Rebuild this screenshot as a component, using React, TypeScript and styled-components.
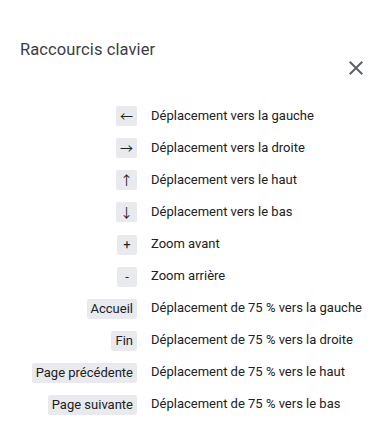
import { Fragment } from "react";
import styled, { createGlobalStyle } from "styled-components";

const GlobalStyle = createGlobalStyle`
  html, body {
    margin: 0;
    padding: 0;
    background: #ffffff;
  }

  body {
    font-family: Roboto, "Liberation Sans", Arial, sans-serif;
  }
`;

const Dialog = styled.div`
  width: 380px;
  height: 437px;
  box-sizing: border-box;
  padding-top: 38px;
  background: #ffffff;
`;

const Header = styled.header`
  display: flex;
  align-items: flex-start;
  justify-content: space-between;
  padding: 0 12px 0 20px;

  h1 {
    margin: 0;
    font-size: 16.5px;
    line-height: 24px;
    font-weight: 400;
    color: #3c4043;
    letter-spacing: 0.1px;
  }
`;

const CloseButton = styled.button`
  margin-top: 18px;
  width: 24px;
  height: 24px;
  padding: 0;
  border: none;
  background: none;
  color: #5f6368;
  cursor: pointer;
  display: flex;
  align-items: center;
  justify-content: center;

  svg {
    width: 24px;
    height: 24px;
    fill: currentColor;
  }
`;

const ShortcutTable = styled.dl`
  display: grid;
  grid-template-columns: 109px auto;
  grid-auto-rows: 32px;
  column-gap: 14px;
  align-items: center;
  margin: 20px 0 0 28px;
  padding: 0;
`;

const KeyCell = styled.dt`
  justify-self: end;
  margin: 0;
`;

const Key = styled.kbd<{ $arrow?: boolean }>`
  display: inline-block;
  box-sizing: border-box;
  min-width: 20px;
  height: 20px;
  padding: 0 4px;
  border-radius: 2px;
  background: #e8eaed;
  color: #202124;
  font-family: ${(p) =>
    p.$arrow
      ? `"Noto Sans CJK JP", sans-serif`
      : `Roboto, "Liberation Sans", Arial, sans-serif`};
  font-size: 13px;
  line-height: 20px;
  text-align: center;
`;

const Description = styled.dd`
  margin: 0;
  font-size: 13px;
  line-height: 20px;
  color: #202124;
  white-space: nowrap;
`;

const shortcuts: { key: string; arrow?: boolean; label: string }[] = [
  { key: "←", arrow: true, label: "Déplacement vers la gauche" },
  { key: "→", arrow: true, label: "Déplacement vers la droite" },
  { key: "↑", arrow: true, label: "Déplacement vers le haut" },
  { key: "↓", arrow: true, label: "Déplacement vers le bas" },
  { key: "+", label: "Zoom avant" },
  { key: "-", label: "Zoom arrière" },
  { key: "Accueil", label: "Déplacement de 75 % vers la gauche" },
  { key: "Fin", label: "Déplacement de 75 % vers la droite" },
  { key: "Page précédente", label: "Déplacement de 75 % vers le haut" },
  { key: "Page suivante", label: "Déplacement de 75 % vers le bas" },
];

export default function App() {
  return (
    <>
      <GlobalStyle />
      <Dialog>
        <Header>
          <h1>Raccourcis clavier</h1>
          <CloseButton aria-label="Fermer">
            <svg viewBox="0 0 24 24">
              <path d="M19 6.41L17.59 5 12 10.59 6.41 5 5 6.41 10.59 12 5 17.59 6.41 19 12 13.41 17.59 19 19 17.59 13.41 12z" />
            </svg>
          </CloseButton>
        </Header>
        <ShortcutTable>
          {shortcuts.map((s) => (
            <Fragment key={s.key}>
              <KeyCell>
                <Key $arrow={s.arrow}>{s.key}</Key>
              </KeyCell>
              <Description>{s.label}</Description>
            </Fragment>
          ))}
        </ShortcutTable>
      </Dialog>
    </>
  );
}
